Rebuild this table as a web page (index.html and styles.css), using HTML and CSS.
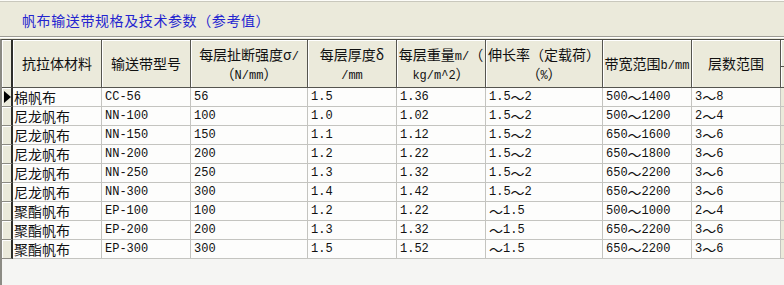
FILE: index.html
```html
<!DOCTYPE html>
<html lang="zh-CN">
<head>
<meta charset="utf-8">
<title>帆布输送带规格及技术参数</title>
<link rel="stylesheet" href="styles.css">
</head>
<body>
<div class="window">
  <div class="titlebar">
    <span class="title">帆布输送带规格及技术参数（参考值）</span>
  </div>
  <div class="grid">
    <table class="sheet">
      <colgroup>
        <col class="c-ind"><col class="c-a"><col class="c-a"><col class="c-b"><col class="c-a"><col class="c-a"><col class="c-b"><col class="c-a"><col class="c-a"><col class="c-rest">
      </colgroup>
      <thead>
        <tr>
          <th class="ind"></th>
          <th>抗拉体材料</th>
          <th>输送带型号</th>
          <th>每层扯断强度σ<span class="lat">/</span><br>（<span class="lat">N/mm</span>）</th>
          <th>每层厚度δ<br><span class="lat">/mm</span></th>
          <th>每层重量<span class="lat">m/</span>（<br><span class="lat">kg/m^2</span>）</th>
          <th>伸长率（定载荷）<br>（<span class="lat">%</span>）</th>
          <th>带宽范围<span class="lat">b/mm</span></th>
          <th>层数范围</th>
          <th class="rest"><span class="rest-line"></span></th>
        </tr>
      </thead>
      <tbody>
        <tr><td class="ind"><span class="arrow"></span></td><td class="cn">棉帆布</td><td>CC-56</td><td>56</td><td>1.5</td><td>1.36</td><td>1.5<span class="w">～</span>2</td><td>500<span class="w">～</span>1400</td><td>3<span class="w">～</span>8</td><td class="rest"></td></tr>
        <tr><td class="ind"></td><td class="cn">尼龙帆布</td><td>NN-100</td><td>100</td><td>1.0</td><td>1.02</td><td>1.5<span class="w">～</span>2</td><td>500<span class="w">～</span>1200</td><td>2<span class="w">～</span>4</td><td class="rest"></td></tr>
        <tr><td class="ind"></td><td class="cn">尼龙帆布</td><td>NN-150</td><td>150</td><td>1.1</td><td>1.12</td><td>1.5<span class="w">～</span>2</td><td>650<span class="w">～</span>1600</td><td>3<span class="w">～</span>6</td><td class="rest"></td></tr>
        <tr><td class="ind"></td><td class="cn">尼龙帆布</td><td>NN-200</td><td>200</td><td>1.2</td><td>1.22</td><td>1.5<span class="w">～</span>2</td><td>650<span class="w">～</span>1800</td><td>3<span class="w">～</span>6</td><td class="rest"></td></tr>
        <tr><td class="ind"></td><td class="cn">尼龙帆布</td><td>NN-250</td><td>250</td><td>1.3</td><td>1.32</td><td>1.5<span class="w">～</span>2</td><td>650<span class="w">～</span>2200</td><td>3<span class="w">～</span>6</td><td class="rest"></td></tr>
        <tr><td class="ind"></td><td class="cn">尼龙帆布</td><td>NN-300</td><td>300</td><td>1.4</td><td>1.42</td><td>1.5<span class="w">～</span>2</td><td>650<span class="w">～</span>2200</td><td>3<span class="w">～</span>6</td><td class="rest"></td></tr>
        <tr><td class="ind"></td><td class="cn">聚酯帆布</td><td>EP-100</td><td>100</td><td>1.2</td><td>1.22</td><td><span class="w">～</span>1.5</td><td>500<span class="w">～</span>1000</td><td>2<span class="w">～</span>4</td><td class="rest"></td></tr>
        <tr><td class="ind"></td><td class="cn">聚酯帆布</td><td>EP-200</td><td>200</td><td>1.3</td><td>1.32</td><td><span class="w">～</span>1.5</td><td>650<span class="w">～</span>2200</td><td>3<span class="w">～</span>6</td><td class="rest"></td></tr>
        <tr><td class="ind"></td><td class="cn">聚酯帆布</td><td>EP-300</td><td>300</td><td>1.5</td><td>1.52</td><td><span class="w">～</span>1.5</td><td>650<span class="w">～</span>2200</td><td>3<span class="w">～</span>6</td><td class="rest"></td></tr>
      </tbody>
    </table>
  </div>
</div>
</body>
</html>
```

FILE: styles.css
```css
* { box-sizing: border-box; }

html, body {
  margin: 0;
  padding: 0;
  background: #ffffff;
}

.window {
  width: 784px;
  height: 285px;
  overflow: hidden;
  background: #ebeadb;
  border-top: 1px solid #fcfcf8;
  display: flex;
  flex-direction: column;
}

.titlebar {
  height: 36px;
  border-top: 1px solid #c9c8bd;
  border-bottom: 1px solid #9d9c94;
  box-shadow: 0 1px 0 #ffffff;
  padding: 9px 0 0 22px;
  background: #ebeadb;
  flex: none;
}

.title {
  font-family: "Noto Sans CJK SC", sans-serif;
  font-size: 14px;
  line-height: 18px;
  letter-spacing: 0.6px;
  color: #2424d0;
}

.grid {
  margin-top: 2px;
  flex: 1;
  background: #f5f5f3;
  border-top: 1px solid #4a4a44;
  border-left: 2px solid #8c8b84;
}

.sheet {
  border-collapse: separate;
  border-spacing: 0;
  table-layout: fixed;
  width: 782px;
}

.c-ind { width: 11px; }
.c-a { width: 89px; }
.c-b { width: 117px; }
.c-rest { width: 3px; }

.sheet th {
  height: 48px;
  padding: 0;
  background: #ebeadb;
  border-right: 1px solid #55554f;
  border-bottom: 1px solid #55554f;
  box-shadow: inset 1px 1px 0 #ffffff;
  font-family: "Noto Sans CJK SC", sans-serif;
  font-weight: normal;
  font-size: 14px;
  line-height: 19px;
  color: #111111;
  text-align: center;
  vertical-align: middle;
  white-space: nowrap;
  overflow: hidden;
}

.lat {
  font-family: "Liberation Mono", monospace;
  font-size: 12px;
  line-height: 14px;
}

.sheet th.ind {
  border-right: 2px solid #2e2e2a;
}

.sheet th.rest {
  border-right: none;
  position: relative;
}

.rest-line {
  position: absolute;
  left: 0;
  right: 0;
  top: 26px;
  height: 1px;
  background: #55554f;
}

.sheet td {
  height: 19px;
  padding: 0 0 0 3px;
  background: #fdfdfc;
  border-right: 1px solid #c4c4c0;
  border-bottom: 1px solid #c4c4c0;
  font-family: "Liberation Mono", monospace;
  font-size: 12px;
  line-height: 18px;
  color: #111111;
  white-space: nowrap;
  overflow: hidden;
  vertical-align: middle;
}

.sheet td.cn {
  font-family: "Noto Sans CJK SC", sans-serif;
  font-size: 14px;
  line-height: 18px;
  padding-left: 1px;
}

.w {
  display: inline-block;
  height: 18px;
  vertical-align: top;
  font-family: "Noto Sans CJK SC", sans-serif;
  font-size: 14px;
  line-height: 18px;
}

.sheet td.ind {
  padding: 0;
  background: #ebeadb;
  border-right: 2px solid #2e2e2a;
  border-bottom: 1px solid #8c8b84;
  box-shadow: inset 1px 1px 0 #ffffff;
  position: relative;
}

.sheet td.rest {
  padding: 0;
  background: #ebeadb;
  border-right: none;
}

.arrow {
  position: absolute;
  left: 2px;
  top: 3px;
  width: 0;
  height: 0;
  border-top: 6px solid transparent;
  border-bottom: 6px solid transparent;
  border-left: 7px solid #000000;
}
```
